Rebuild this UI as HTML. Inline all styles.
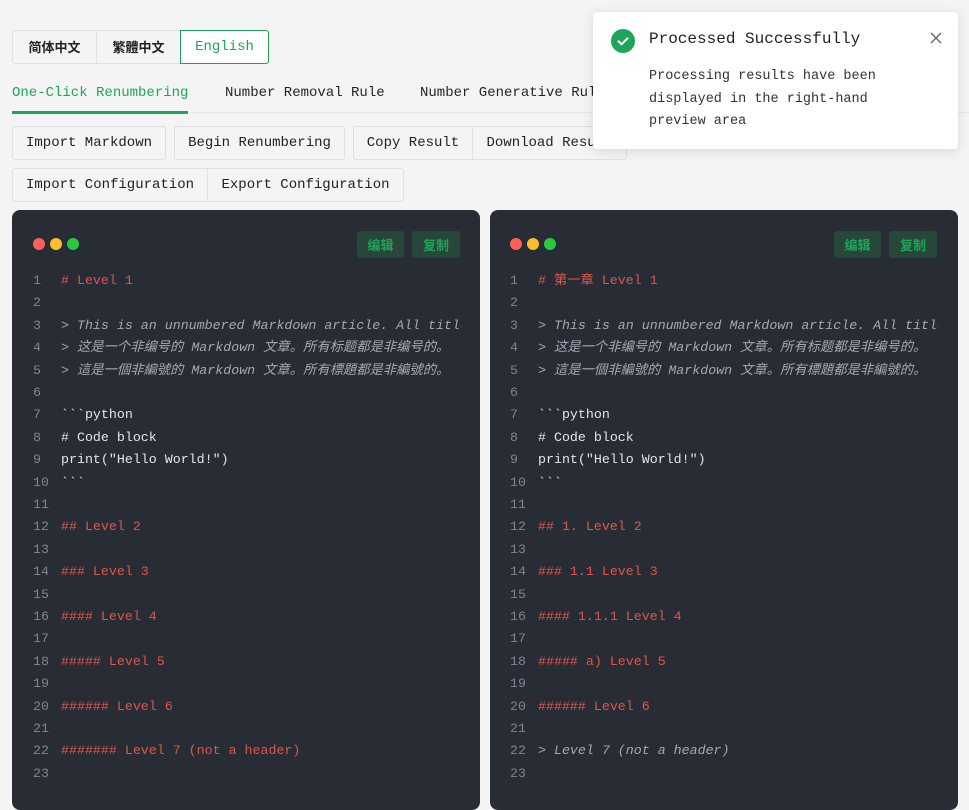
<!DOCTYPE html>
<html><head><meta charset="utf-8"><style>
*{box-sizing:border-box;margin:0;padding:0}
body{width:969px;height:787px;overflow:hidden;background:#f4f4f5;font-family:"Liberation Mono","DejaVu Sans Mono","Noto Sans CJK SC",monospace;color:#1f2329;position:relative}
.b{position:absolute;height:34px;border:1px solid #dcdfe6;background:#f4f4f5;font-size:14px;line-height:32px;text-align:center;color:#222;border-radius:3px}
.tab{position:absolute;top:85px;font-size:14px}
.panel{position:absolute;top:210px;width:468px;height:600px;background:#282c34;border-radius:8px}
.dot{position:absolute;top:238px;width:12px;height:12px;border-radius:50%}
.eb{position:absolute;top:231px;height:27px;background:#26473a;color:#1fa55a;font-family:"Noto Sans CJK SC",sans-serif;font-size:13px;line-height:27px;text-align:center;border-radius:3px;font-weight:bold}
.L{position:absolute;height:22px;font-size:13.3px;line-height:22px;white-space:nowrap;font-family:"Liberation Mono","Noto Sans CJK SC",monospace}
.n{color:#7f8590}
.r{color:#e0564a}
.w{color:#e3e5e8}
.q{color:#a3a8b2;font-style:italic}
.clip{position:absolute;top:261px;width:400px;height:540px;overflow:hidden}
</style></head><body>
<div class="b" style="left:12px;top:30px;width:85px;font-family:'Noto Sans CJK SC',sans-serif;font-size:13px;font-weight:bold;border-radius:3px 0 0 3px">简体中文</div>
<div class="b" style="left:96px;top:30px;width:85px;font-family:'Noto Sans CJK TC',sans-serif;font-size:13px;font-weight:bold;border-radius:0">繁體中文</div>
<div class="b" style="left:180px;top:30px;width:89px;border-color:#1fa55a;color:#1fa55a;background:#fff;border-radius:0 3px 3px 0">English</div>
<div class="tab" style="left:12px;color:#1fa55a">One-Click Renumbering</div>
<div class="tab" style="left:225px">Number Removal Rule</div>
<div class="tab" style="left:420px">Number Generative Rule</div>
<div style="position:absolute;left:12px;top:112px;width:957px;height:1px;background:#e4e6ea"></div>
<div style="position:absolute;left:12px;top:111px;width:176px;height:3px;background:#1fa55a"></div>
<div class="b" style="left:12px;top:126px;width:154px">Import Markdown</div>
<div class="b" style="left:174px;top:126px;width:171px">Begin Renumbering</div>
<div class="b" style="left:353px;top:126px;width:120px;border-radius:3px 0 0 3px">Copy Result</div>
<div class="b" style="left:472px;top:126px;width:155px;border-radius:0 3px 3px 0">Download Result</div>
<div class="b" style="left:12px;top:168px;width:196px;border-radius:3px 0 0 3px">Import Configuration</div>
<div class="b" style="left:207px;top:168px;width:197px;border-radius:0 3px 3px 0">Export Configuration</div>

<div class="panel" style="left:12px"></div>
<div class="panel" style="left:490px"></div>
<div class="dot" style="left:33px;background:#ff5f57"></div><div class="dot" style="left:50px;background:#febc2e"></div><div class="dot" style="left:67px;background:#28c840"></div>
<div class="dot" style="left:510px;background:#ff5f57"></div><div class="dot" style="left:527px;background:#febc2e"></div><div class="dot" style="left:544px;background:#28c840"></div>
<div class="eb" style="left:357px;width:47px">编辑</div><div class="eb" style="left:412px;width:48px">复制</div>
<div class="eb" style="left:834px;width:47px">编辑</div><div class="eb" style="left:889px;width:48px">复制</div>

<div class="L n" style="left:33px;top:270px">1</div>
<div class="L n" style="left:33px;top:292px">2</div>
<div class="L n" style="left:33px;top:315px">3</div>
<div class="L n" style="left:33px;top:337px">4</div>
<div class="L n" style="left:33px;top:360px">5</div>
<div class="L n" style="left:33px;top:382px">6</div>
<div class="L n" style="left:33px;top:404px">7</div>
<div class="L n" style="left:33px;top:427px">8</div>
<div class="L n" style="left:33px;top:449px">9</div>
<div class="L n" style="left:33px;top:472px">10</div>
<div class="L n" style="left:33px;top:494px">11</div>
<div class="L n" style="left:33px;top:516px">12</div>
<div class="L n" style="left:33px;top:539px">13</div>
<div class="L n" style="left:33px;top:561px">14</div>
<div class="L n" style="left:33px;top:584px">15</div>
<div class="L n" style="left:33px;top:606px">16</div>
<div class="L n" style="left:33px;top:628px">17</div>
<div class="L n" style="left:33px;top:651px">18</div>
<div class="L n" style="left:33px;top:673px">19</div>
<div class="L n" style="left:33px;top:696px">20</div>
<div class="L n" style="left:33px;top:718px">21</div>
<div class="L n" style="left:33px;top:740px">22</div>
<div class="L n" style="left:33px;top:763px">23</div>
<div class="L n" style="left:510px;top:270px">1</div>
<div class="L n" style="left:510px;top:292px">2</div>
<div class="L n" style="left:510px;top:315px">3</div>
<div class="L n" style="left:510px;top:337px">4</div>
<div class="L n" style="left:510px;top:360px">5</div>
<div class="L n" style="left:510px;top:382px">6</div>
<div class="L n" style="left:510px;top:404px">7</div>
<div class="L n" style="left:510px;top:427px">8</div>
<div class="L n" style="left:510px;top:449px">9</div>
<div class="L n" style="left:510px;top:472px">10</div>
<div class="L n" style="left:510px;top:494px">11</div>
<div class="L n" style="left:510px;top:516px">12</div>
<div class="L n" style="left:510px;top:539px">13</div>
<div class="L n" style="left:510px;top:561px">14</div>
<div class="L n" style="left:510px;top:584px">15</div>
<div class="L n" style="left:510px;top:606px">16</div>
<div class="L n" style="left:510px;top:628px">17</div>
<div class="L n" style="left:510px;top:651px">18</div>
<div class="L n" style="left:510px;top:673px">19</div>
<div class="L n" style="left:510px;top:696px">20</div>
<div class="L n" style="left:510px;top:718px">21</div>
<div class="L n" style="left:510px;top:740px">22</div>
<div class="L n" style="left:510px;top:763px">23</div>

<div class="clip" style="left:61px">
<div class="L r" style="left:0;top:9px"># Level 1</div>
<div class="L q" style="left:0;top:54px">&gt; This is an unnumbered Markdown article. All titles</div>
<div class="L q" style="left:0;top:76px">&gt; 这是一个非编号的 Markdown 文章。所有标题都是非编号的。</div>
<div class="L q" style="left:0;top:99px">&gt; 這是一個非編號的 Markdown 文章。所有標題都是非編號的。</div>
<div class="L w" style="left:0;top:143px">&#96;&#96;&#96;python</div>
<div class="L w" style="left:0;top:166px"># Code block</div>
<div class="L w" style="left:0;top:188px">print("Hello World!")</div>
<div class="L w" style="left:0;top:211px">&#96;&#96;&#96;</div>
<div class="L r" style="left:0;top:255px">## Level 2</div>
<div class="L r" style="left:0;top:300px">### Level 3</div>
<div class="L r" style="left:0;top:345px">#### Level 4</div>
<div class="L r" style="left:0;top:390px">##### Level 5</div>
<div class="L r" style="left:0;top:435px">###### Level 6</div>
<div class="L r" style="left:0;top:479px">####### Level 7 (not a header)</div>
</div>

<div class="clip" style="left:538px">
<div class="L r" style="left:0;top:9px"># 第一章 Level 1</div>
<div class="L q" style="left:0;top:54px">&gt; This is an unnumbered Markdown article. All titles</div>
<div class="L q" style="left:0;top:76px">&gt; 这是一个非编号的 Markdown 文章。所有标题都是非编号的。</div>
<div class="L q" style="left:0;top:99px">&gt; 這是一個非編號的 Markdown 文章。所有標題都是非編號的。</div>
<div class="L w" style="left:0;top:143px">&#96;&#96;&#96;python</div>
<div class="L w" style="left:0;top:166px"># Code block</div>
<div class="L w" style="left:0;top:188px">print("Hello World!")</div>
<div class="L w" style="left:0;top:211px">&#96;&#96;&#96;</div>
<div class="L r" style="left:0;top:255px">## 1. Level 2</div>
<div class="L r" style="left:0;top:300px">### 1.1 Level 3</div>
<div class="L r" style="left:0;top:345px">#### 1.1.1 Level 4</div>
<div class="L r" style="left:0;top:390px">##### a) Level 5</div>
<div class="L r" style="left:0;top:435px">###### Level 6</div>
<div class="L q" style="left:0;top:479px">&gt; Level 7 (not a header)</div>
</div>

<div style="position:absolute;left:593px;top:12px;width:365px;height:137px;background:#fff;border-radius:4px;box-shadow:0 2px 12px rgba(0,0,0,.12)"></div>
<svg style="position:absolute;left:611px;top:29px" width="24" height="24" viewBox="0 0 24 24"><circle cx="12" cy="12" r="12" fill="#1fa55a"/><path d="M7.5 12.3l3 3 6-6" stroke="#fff" stroke-width="2" fill="none" stroke-linecap="round" stroke-linejoin="round"/></svg>
<div style="position:absolute;left:649px;top:30px;font-size:16px;color:#222">Processed Successfully</div>
<svg style="position:absolute;left:929px;top:31px" width="14" height="14" viewBox="0 0 14 14"><path d="M2 2L12 12M12 2L2 12" stroke="#666" stroke-width="1.4"/></svg>
<div style="position:absolute;left:649px;top:66px;width:250px;font-size:13.5px;line-height:22.6px;color:#333">Processing results have been displayed in the right-hand preview area</div>
</body></html>
